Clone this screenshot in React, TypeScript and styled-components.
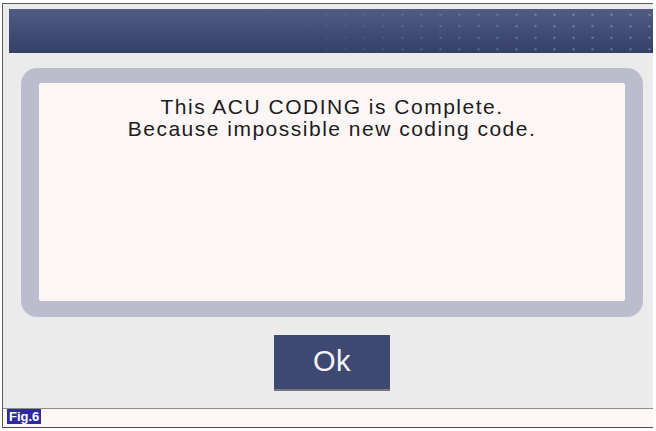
import styled, { createGlobalStyle } from "styled-components"

const GlobalStyle = createGlobalStyle`
  html, body {
    margin: 0;
    padding: 0;
    background: #ffffff;
  }
  body {
    font-family: "Liberation Sans", Arial, sans-serif;
  }
`

const Screen = styled.div`
  margin: 3px 0 0 2px;
  width: 650px;
  border-top: 1px solid #5c5c5c;
  border-left: 1px solid #5c5c5c;
  border-bottom: 1px solid #4a4a4a;
  background: #fff6f6;
`

const Panel = styled.div`
  height: 405px;
  box-sizing: border-box;
  padding: 5px 0 0 6px;
  background: #ebebeb;
  border-bottom: 1px solid #8c8c8c;
  display: flex;
  flex-direction: column;
`

const TitleBar = styled.div`
  position: relative;
  height: 44px;
  background: linear-gradient(180deg, #505c83 0%, #414c75 55%, #353f68 100%);
  overflow: hidden;

  &::after {
    content: "";
    position: absolute;
    inset: 0;
    background-image: radial-gradient(circle, rgba(180, 190, 215, 0.45) 0.9px, transparent 1.4px);
    background-size: 19px 11.5px;
    background-position: 4px 0px;
    -webkit-mask-image: linear-gradient(90deg, transparent 40%, #000 85%);
    mask-image: linear-gradient(90deg, transparent 40%, #000 85%);
  }
`

const Body = styled.div`
  margin: 15px 0 0 12px;
  width: 622px;
  display: flex;
  flex-direction: column;
  align-items: center;
`

const Frame = styled.div`
  width: 100%;
  height: 249px;
  box-sizing: border-box;
  padding: 15px 18px 16px 18px;
  border-radius: 16px;
  background: #bbbdcc;
`

const Message = styled.div`
  height: 100%;
  box-sizing: border-box;
  padding-top: 13px;
  border-radius: 2px;
  background: #fdf6f6;
  color: #1c1c1c;
  font-family: "Liberation Sans", Arial, sans-serif;
  font-size: 21px;
  line-height: 22px;
  letter-spacing: 1.5px;
  text-align: center;
`

const Line = styled.div`
  white-space: nowrap;
`

const OkButton = styled.button`
  margin-top: 18px;
  width: 116px;
  height: 56px;
  padding: 0 0 2px;
  border: none;
  border-bottom: 2px solid #77777b;
  background: #3e4971;
  color: #f4f4f8;
  font-family: "Liberation Sans", Arial, sans-serif;
  font-size: 29px;
  font-weight: 500;
  letter-spacing: 0.5px;
  cursor: pointer;
`

const Footer = styled.div`
  height: 18px;
  padding-left: 4px;
  display: flex;
  align-items: flex-start;
`

const FigLabel = styled.span`
  display: inline-block;
  height: 15px;
  padding: 0 2px;
  background: #2c2ca0;
  color: #ffffff;
  font-family: "Liberation Sans", Arial, sans-serif;
  font-weight: 700;
  font-size: 13px;
  line-height: 15px;
`

export default function App() {
  return (
    <>
      <GlobalStyle />
      <Screen>
        <Panel>
          <TitleBar />
          <Body>
            <Frame>
              <Message>
                <Line>This ACU CODING is Complete.</Line>
                <Line>Because impossible new coding code.</Line>
              </Message>
            </Frame>
            <OkButton>Ok</OkButton>
          </Body>
        </Panel>
        <Footer>
          <FigLabel>Fig.6</FigLabel>
        </Footer>
      </Screen>
    </>
  )
}
